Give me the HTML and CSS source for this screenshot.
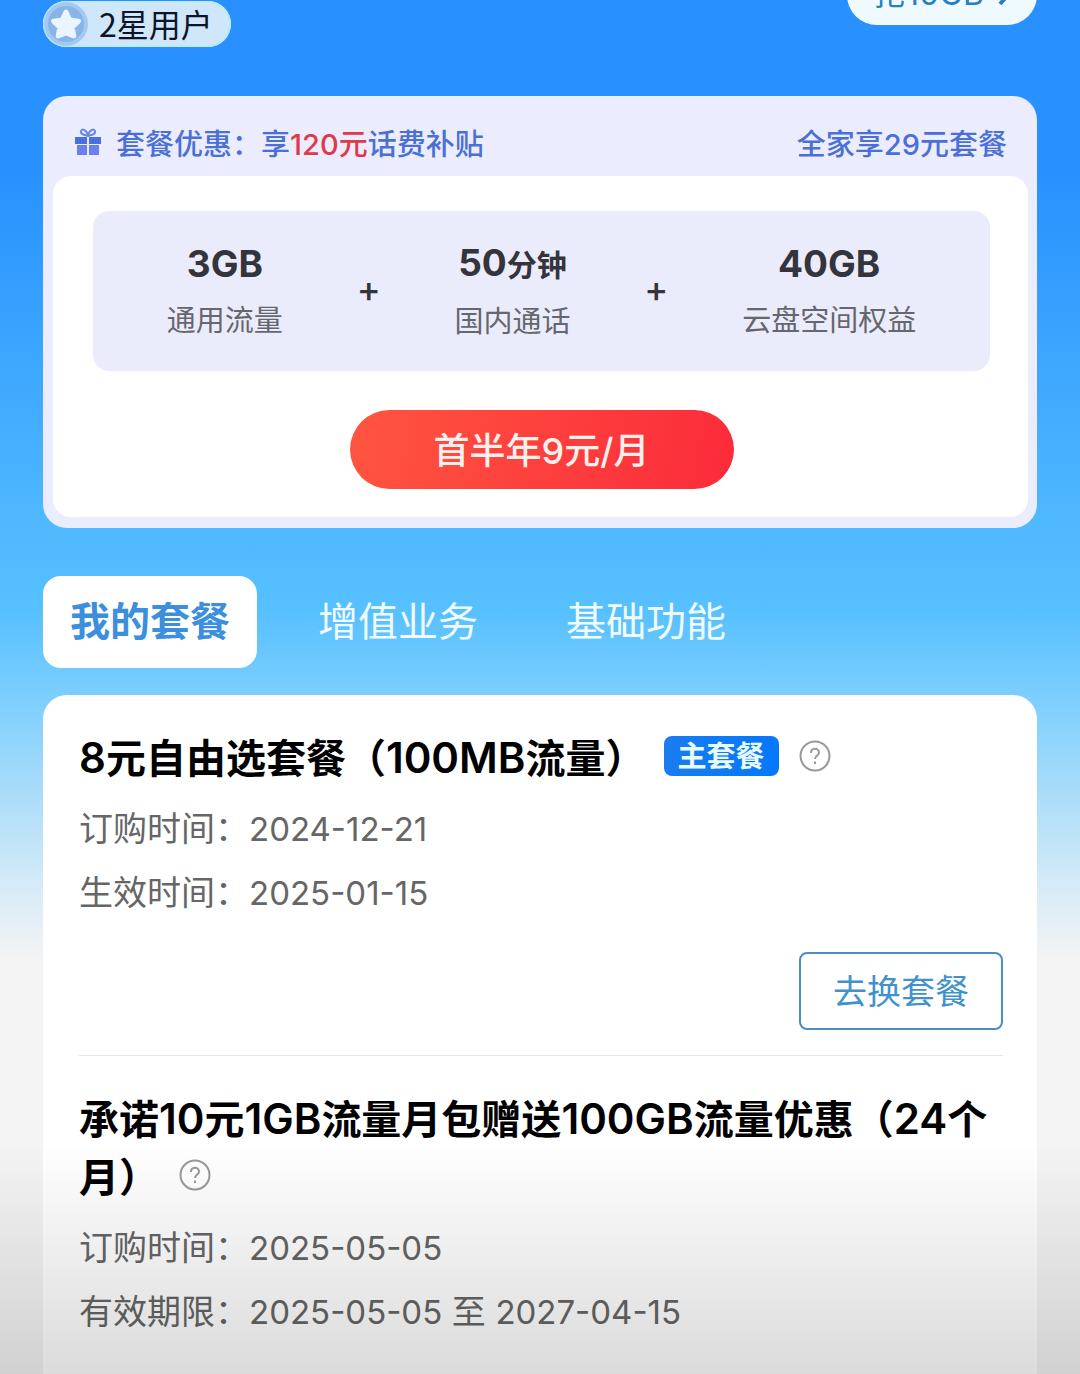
FILE: index.html
```html
<!DOCTYPE html>
<html lang="zh-CN">
  <head>
    <meta charset="UTF-8">
    <meta name="viewport" content="width=device-width, initial-scale=1">
    <title>我的套餐</title>
    <link rel="stylesheet" href="styles.css">
  </head>
  <body>
    <header class="topbar">
      <div class="level">
        <svg class="level-icon" viewBox="0 0 46 46" aria-hidden="true">
          <circle cx="23" cy="23" r="22" fill="#a3c9f2"/>
          <circle cx="23" cy="23" r="18" fill="#88b4e8"/>
          <path d="M23 11l3.800 8 8.700 1.200-6.300 6.100 1.600 8.700-7.800-3-7.800 3 1.600-8.700-6.300-6.100 8.700-1.200z" fill="#e9f6ff" stroke="#e9f6ff" stroke-width="5" stroke-linejoin="round"/>
        </svg>
        <span>2星用户</span>
      </div>
      <a class="grab" href="#"><span>抢10GB</span>
        <svg class="arrow" viewBox="0 0 12 22" aria-hidden="true">
          <path d="M2 2l8 9-8 9" fill="none" stroke="currentColor" stroke-width="4"/>
        </svg>
      </a>
    </header>

    <section class="promo">
      <div class="promo-head">
        <svg class="gift" viewBox="0 0 26 28" aria-hidden="true">
          <path d="M13 8C9 7 5 6 6 3s6-1 7 5c1-6 6-8 7-5s-3 4-7 5z" fill="none" stroke="#6c88e8" stroke-width="2"/>
          <path d="M0 9h12v7H0zM14 9h12v7H14z" fill="#4a70e0"/>
          <path d="M2 17h10v10H2zM14 17h10v10H14z" fill="#6a80f2"/>
        </svg>
        <p>套餐优惠：享<strong>120元</strong>话费补贴</p>
        <a href="#">全家享29元套餐</a>
      </div>
      <div class="promo-body">
        <div class="benefits">
          <div class="benefit"><b>3GB</b><span>通用流量</span></div>
          <i class="plus">+</i>
          <div class="benefit"><b>50<small>分钟</small></b><span>国内通话</span></div>
          <i class="plus">+</i>
          <div class="benefit"><b>40GB</b><span>云盘空间权益</span></div>
        </div>
        <button class="buy" type="button">首半年9元/月</button>
      </div>
    </section>

    <nav class="tabs">
      <button class="tab active" type="button">我的套餐</button>
      <button class="tab" type="button">增值业务</button>
      <button class="tab" type="button">基础功能</button>
    </nav>

    <main class="plans">
      <article class="plan">
        <h2><span class="num">8</span>元自由选套餐（<span class="num">100MB</span>流量）<span class="tag">主套餐</span><button class="help" type="button" aria-label="说明"><svg viewBox="0 0 32 32" aria-hidden="true">
          <circle cx="16" cy="16" r="14.500"/>
          <path d="M12 13c0-5.500 8-5.500 8-.5 0 3-4 3.500-4 6.500M16 21.500v2.500"/>
        </svg></button></h2>
        <p>订购时间：<time>2024-12-21</time></p>
        <p>生效时间：<time>2025-01-15</time></p>
        <div class="actions">
          <button class="change" type="button">去换套餐</button>
        </div>
      </article>
      <article class="plan">
        <h2>承诺<span class="num">10</span>元<span class="num">1GB</span>流量月包赠送<span class="num">100GB</span>流量优惠（<span class="num">24</span>个月）<button class="help" type="button" aria-label="说明"><svg viewBox="0 0 32 32" aria-hidden="true">
          <circle cx="16" cy="16" r="14.500"/>
          <path d="M12 13c0-5.500 8-5.500 8-.5 0 3-4 3.500-4 6.500M16 21.500v2.500"/>
        </svg></button></h2>
        <p>订购时间：<time>2025-05-05</time></p>
        <p>有效期限：<time>2025-05-05</time> 至 <time>2027-04-15</time></p>
      </article>
    </main>
    <div class="fade"></div>
  </body>
</html>
```
FILE: styles.css
```css
* {
  box-sizing: border-box;
}
body {
  display: flex;
  flex-direction: column;
  min-height: 100vh;
  margin: 0;
  padding: 0 43px;
  background: #f4f4f4 linear-gradient(#2891ff 170px, #4fb8ff 520px, #57c0ff 610px, #7dcfff 700px, #a8dcf9 790px, #d3eaf8 880px, #f4f4f4 960px) no-repeat;
  font-family: "Noto Sans CJK SC", sans-serif;
}
button {
  margin: 0;
  padding: 0;
  border: none;
  background: none;
  font-family: inherit;
  cursor: pointer;
}
a {
  color: inherit;
  text-decoration: none;
}
h2, p {
  margin: 0;
}

/* top bar */
.topbar {
  display: flex;
  justify-content: space-between;
  align-items: flex-start;
  height: 96px;
}
.level {
  display: flex;
  align-items: center;
  gap: 10px;
  height: 46px;
  margin-top: 1px;
  padding-right: 18px;
  border-radius: 23px;
  background-color: #cfe6fb;
  box-shadow: inset 0 0 0 2px #bdeafd;
  color: #0b1526;
  font-size: 32px;
  line-height: 42px;
}
.level span {
  padding-bottom: 2px;
}
.level-icon {
  width: 46px;
  height: 46px;
}
.grab {
  display: flex;
  justify-content: center;
  align-items: center;
  gap: 14px;
  width: 190px;
  height: 60px;
  margin-top: -35px;
  border-radius: 30px;
  background-color: #effaff;
  color: #2a7fc0;
  font-family: Inter, "Noto Sans CJK SC", sans-serif;
  font-size: 32px;
}
.grab span {
  padding-bottom: 8px;
}
.arrow {
  width: 12px;
  height: 22px;
}

/* promo card */
.promo {
  padding: 0 9px 11px 10px;
  border-radius: 24px;
  background-color: #ebecfd;
}
.promo-head {
  display: flex;
  align-items: center;
  height: 80px;
  padding: 12px 21px 0 22px;
  color: #4a70d6;
  font-family: Inter, "Noto Sans CJK SC", sans-serif;
  font-size: 29px;
  font-weight: 500;
}
.promo-head p {
  flex: 1;
}
.promo-head strong {
  color: #e0394b;
  font-weight: 500;
}
.gift {
  width: 26px;
  height: 28px;
  margin-right: 15px;
}
.promo-body {
  padding: 35px 38px 28px 40px;
  border-radius: 18px;
  background-color: #fff;
  text-align: center;
}
.benefits {
  display: flex;
  justify-content: space-evenly;
  align-items: center;
  height: 160px;
  border-radius: 16px;
  background-color: #ebecfb;
}
.benefit {
  display: flex;
  flex-direction: column;
  color: #66666e;
  font-size: 29px;
  line-height: 54px;
}
.benefit b {
  color: #34343c;
  font-family: Inter, "Noto Sans CJK SC", sans-serif;
  font-size: 37px;
}
.benefit small {
  font-size: 30px;
}
.plus {
  padding-bottom: 4px;
  color: #34343c;
  font-family: Inter, sans-serif;
  font-size: 36px;
  font-style: normal;
  font-weight: 500;
}
.buy {
  width: 384px;
  height: 79px;
  margin-top: 39px;
  padding-bottom: 3px;
  border-radius: 40px;
  background: linear-gradient(100deg, #ff5540, #fb2b3a);
  color: #fff0ee;
  font-family: Inter, "Noto Sans CJK SC", sans-serif;
  font-size: 36px;
  font-weight: 500;
}

/* tabs */
.tabs {
  display: flex;
  gap: 34px;
  margin: 48px 0 27px;
}
.tab {
  height: 92px;
  padding: 0 27px 6px;
  border-radius: 18px;
  color: #f0fbff;
  font-size: 40px;
}
.tab.active {
  background-color: #fff;
  color: #3b8fdc;
  font-weight: bold;
}

/* plan list */
.plans {
  flex: 1;
  padding: 0 34px 30px 36px;
  border-radius: 24px 24px 0 0;
  background-color: #fff;
}
.plan {
  padding-top: 35px;
}
.plan + .plan {
  border-top: 1px solid #e6e6e6;
}
.plan h2 {
  margin-bottom: 9px;
  color: #000;
  font-family: Inter, "Noto Sans CJK SC", sans-serif;
  font-size: 40px;
  font-weight: 600;
  line-height: 58px;
}
.num {
  font-size: 42px;
  line-height: 40px;
}
.plan p {
  color: #666;
  font-family: Inter, "Noto Sans CJK SC", sans-serif;
  font-size: 34px;
  line-height: 64px;
}
.plan time {
  font-size: 33px;
}
.tag {
  display: inline-block;
  height: 40px;
  margin-left: 18px;
  padding: 0 14px;
  border-radius: 8px;
  background: linear-gradient(90deg, #1a7cf0, #0478fb);
  color: #e8fbff;
  font-size: 29px;
  line-height: 42px;
  vertical-align: 6px;
}
.help {
  width: 32px;
  height: 32px;
  margin-left: 20px;
  line-height: 0;
  vertical-align: 1px;
}
.help svg {
  width: 32px;
  height: 32px;
  fill: none;
  stroke: #999;
  stroke-width: 2;
}
.actions {
  display: flex;
  justify-content: flex-end;
  padding: 27px 0 25px;
}
.change {
  width: 204px;
  height: 78px;
  padding-bottom: 4px;
  border: 2px solid #4a8fc0;
  border-radius: 8px;
  color: #4192cc;
  font-size: 34px;
}

/* shade over the bottom of the screen */
.fade {
  position: fixed;
  right: 0;
  bottom: 0;
  left: 0;
  height: 230px;
  background: linear-gradient(rgba(0, 0, 0, 0), rgba(0, 0, 0, 0.14));
  pointer-events: none;
}
```
